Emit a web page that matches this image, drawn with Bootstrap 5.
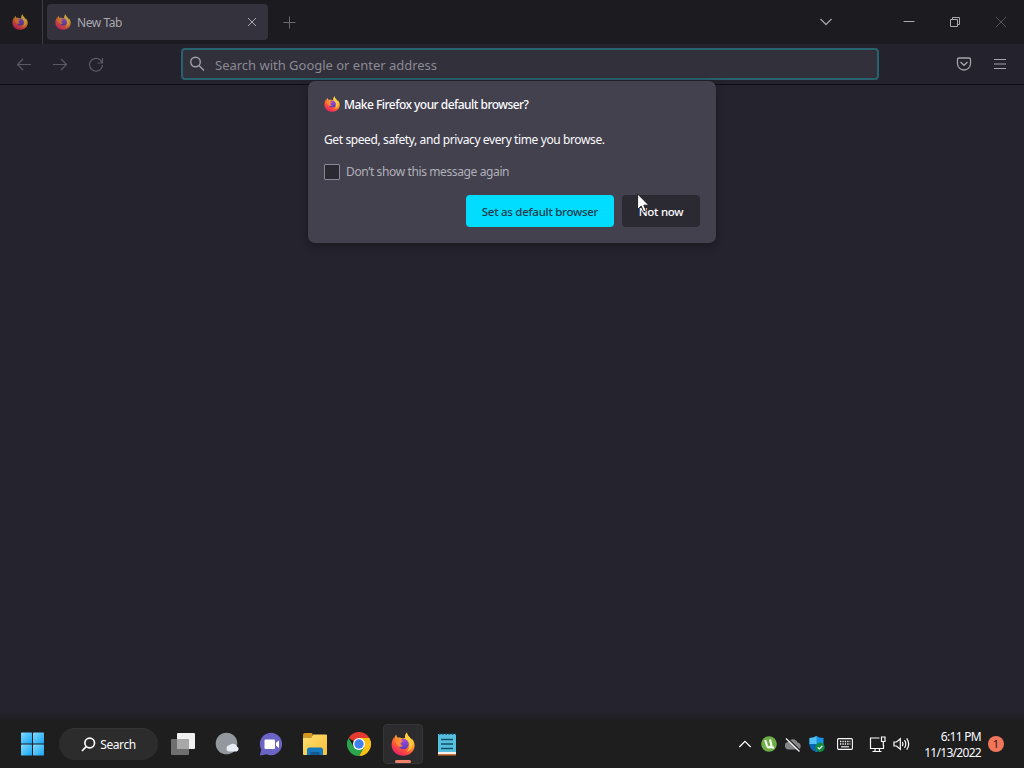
<!DOCTYPE html>
<html lang="en">
<head>
  <meta charset="UTF-8">
  <title>New Tab</title>
  <link rel="stylesheet" href="https://cdn.jsdelivr.net/npm/bootstrap@5.3.2/dist/css/bootstrap.min.css">
  <style>
    body {
      background: #25232e;
      font-family: "Noto Sans", "Open Sans", sans-serif;
      font-size: 12px;
      line-height: 16px;
      color: #fbfbfe;
    }
    svg { display: block; flex: none; }
    .line { fill: none; stroke: currentColor; }

    /* browser chrome */
    .tab-strip { height: 44px; background: #1c1b20; }
    .pinned { width: 43px; padding-left: 12px; border-right: 1px solid #3d3c43; }
    .faded { opacity: .72; }
    .browser-tab {
      width: 221px; height: 36px; margin-left: 4px; padding: 0 10px 0 8px;
      background: #34323d; border-radius: 4px; color: #a9a8ae;
    }
    .new-tab { width: 42px; color: #69686e; }
    .all-tabs { width: 40px; margin-right: 40px; color: #a09fa4; }
    .win-btn { width: 46px; color: #aaa9ad; }
    .win-close { color: #55545a; }
    .tool-bar { height: 41px; background: #24232d; border-bottom: 1px solid #0f0e14; padding: 0 8px; }
    .tool-btn { width: 32px; height: 32px; }
    .nav-tools { color: #5b5a63; }
    .menu-tools { color: #a5a4ab; }
    .address {
      width: 698px; height: 32px; margin-left: 69px; padding-left: 6px;
      background: #32303b; border: 2px solid #28626e; border-radius: 4px;
      color: #8b8a93; font-size: 13px;
    }
    .address svg { color: #a09fa8; }

    /* default browser prompt */
    .prompt {
      position: absolute; top: -4px; left: 308px; width: 408px; height: 162px;
      padding: 15px 16px 16px; background: #43414e; border-radius: 7px;
      box-shadow: 0 2px 8px rgba(0, 0, 0, .35);
    }
    .prompt-text { margin-top: 19px; }
    .prompt-check { margin-bottom: 15px; color: #b1b0b9; }
    .check { width: 16px; height: 16px; background: #2b2a33; border: 1px solid #8a8893; border-radius: 1px; }
    .prompt-btn { height: 32px; border: 0; border-radius: 4px; padding: 1px 0 0; font-size: 11.5px; line-height: 32px; }
    .btn-set { width: 148px; background: #00ddff; color: #1e3a4c; font-weight: 500; }
    .btn-later { width: 78px; background: #2b2a33; color: #fbfbfe; font-weight: 500; }
    .pointer { position: absolute; left: 329px; top: 112px; }

    /* taskbar */
    .task-bar { height: 49px; background: #1e1e1f; padding: 1px 20px 0 10px; }
    .fade-edge { height: 8px; background: linear-gradient(#25232e, #201f24); }
    .task-btn { width: 44px; height: 40px; }
    .search-pill { width: 99px; height: 32px; margin: 0 3px 0 5px; border-radius: 16px; background: #2c2c2c; border-top: 1px solid #353535; }
    .task-active { width: 40px; margin: 0 2px; background: #2c2b2d; border: 1px solid #363537; border-radius: 4px; }
    .running { position: absolute; bottom: 0; left: 11px; width: 16px; height: 3px; border-radius: 2px; background: #f0826c; }
    .tray-btn { width: 24px; }
    .clock { width: 68px; padding-top: 1px; }
    .note-count { width: 16px; height: 16px; margin-left: 7px; border-radius: 50%; background: #f0755b; color: #2a1512; font-size: 11px; }

    /* letter spacing per label */
    .ls-tab { letter-spacing: -.42px; padding: 2px 0 0 6px; }
    .ls-addr { padding: 2px 0 0 10px; letter-spacing: -.01px; }
    .ls-title { letter-spacing: -.53px; font-weight: 500; padding-top: 1px; }
    .ls-text { letter-spacing: -.39px; }
    .ls-check { letter-spacing: -.38px; padding-left: 6px; }
    .ls-btn { letter-spacing: -.28px; }
    .ls-task { letter-spacing: -.4px; padding-top: 1px; }
    .ls-clock { letter-spacing: -.7px; }
  </style>
</head>
<body class="vh-100 overflow-hidden d-flex flex-column">

  <svg width="0" height="0" class="position-absolute">
    <defs>
      <linearGradient id="flame" x1=".85" y1="0" x2=".25" y2="1">
        <stop offset="0" stop-color="#fff04f"/>
        <stop offset=".35" stop-color="#ffb02e"/>
        <stop offset=".65" stop-color="#ff5a36"/>
        <stop offset="1" stop-color="#e6196b"/>
      </linearGradient>
      <linearGradient id="globe" x1="0" y1="0" x2="0" y2="1">
        <stop offset="0" stop-color="#a24be8"/>
        <stop offset="1" stop-color="#5b3bb8"/>
      </linearGradient>
      <linearGradient id="win" x1="0" y1="0" x2="1" y2="1">
        <stop offset="0" stop-color="#7fdcff"/>
        <stop offset="1" stop-color="#18a3f2"/>
      </linearGradient>
      <linearGradient id="folder" x1="0" y1="0" x2="1" y2="1">
        <stop offset="0" stop-color="#ffdf70"/>
        <stop offset="1" stop-color="#f6bf38"/>
      </linearGradient>
    </defs>
    <symbol id="firefox" viewBox="0 0 24 24">
      <path fill="url(#flame)" d="M16 .4c0 2 1 3.200 2.500 4.700.9.900 1.500 1.900 1.800 3l.4-1.700c2.100 2.300 3.100 5 2.900 7.900C23 20 18.400 23.700 12.300 23.700 5.800 23.700.7 19.300.6 13c0-2.900.9-5.500 2.300-7.500l.5 1.400c.1-1.700.7-3.200 1.800-4.300.2 1.300.7 2.300 1.500 3.100.9-.3 1.900-.3 2.700 0L12 6.500l2.200-.8C13.800 3.500 14.600 1.600 16 .4z"/>
      <circle cx="12.500" cy="12" r="5.300" fill="url(#globe)"/>
      <path fill="#ff8a30" d="M4.500 8.300c1.700-1.100 3.600-1 5.300-.2 1 .4 1.700.3 2.200.5-.2 1.300-1.300 1.600-2.300 2.400-.3 1.700.8 2.700 2.400 2.700-1.400 1.300-3.900 1.500-5.200.3C5.500 12.500 4.500 10.700 4.500 8.300z"/>
      <path fill="#ffcf3c" d="M16 .4c0 2 1 3.200 2.500 4.700 2.600 2.500 3.600 6 2.600 9.300-.8 2.800-3 4.800-5.600 5.600 2.700-2.400 3.700-5.500 2.500-9-.8-2.300-3.300-3.400-3.800-5.300C13.800 3.500 14.600 1.600 16 .4z" opacity=".85"/>
    </symbol>
  </svg>

  <header>
    <div class="tab-strip d-flex align-items-center">
      <div class="pinned h-100 d-flex align-items-center">
        <svg class="faded" width="16" height="16"><use href="#firefox"/></svg>
      </div>
      <div class="browser-tab d-flex align-items-center">
        <svg class="faded" width="16" height="16"><use href="#firefox"/></svg>
        <span class="ls-tab flex-grow-1">New Tab</span>
        <svg class="line" width="12" height="12" viewBox="0 0 12 12"><path d="M2 2l8 8M10 2l-8 8"/></svg>
      </div>
      <div class="new-tab d-flex justify-content-center">
        <svg class="line" width="14" height="14" viewBox="0 0 14 14"><path d="M7.500 1.500v12M1.500 7.500h12"/></svg>
      </div>
      <div class="all-tabs ms-auto d-flex justify-content-center">
        <svg class="line" width="14" height="10" viewBox="0 0 14 10" stroke-width="1.400"><path d="M1.500 2L7 7.500 12.500 2"/></svg>
      </div>
      <div class="win-btn d-flex justify-content-center">
        <svg class="line" width="12" height="12" viewBox="0 0 12 12"><path d="M.5 5.500h11"/></svg>
      </div>
      <div class="win-btn d-flex justify-content-center">
        <svg class="line" width="12" height="12" viewBox="0 0 12 12"><path d="M1.500 3.500h7v7h-7zM3.500 3.500v-2h7v7h-2"/></svg>
      </div>
      <div class="win-btn win-close d-flex justify-content-center">
        <svg class="line" width="12" height="12" viewBox="0 0 12 12"><path d="M1 1l10 10M11 1L1 11"/></svg>
      </div>
    </div>

    <div class="tool-bar d-flex align-items-center">
      <div class="nav-tools d-flex gap-1">
        <div class="tool-btn d-flex align-items-center justify-content-center">
          <svg class="line" width="16" height="16" viewBox="0 0 16 16" stroke-width="1.200"><path d="M15 8.500H1.500M7 3L1.500 8.500 7 14"/></svg>
        </div>
        <div class="tool-btn d-flex align-items-center justify-content-center">
          <svg class="line" width="16" height="16" viewBox="0 0 16 16" stroke-width="1.200"><path d="M1 8.500h13.500M9 3l5.500 5.500L9 14"/></svg>
        </div>
        <div class="tool-btn d-flex align-items-center justify-content-center">
          <svg class="line" width="16" height="16" viewBox="0 0 16 16" stroke-width="1.200"><path d="M14 6.500A6.400 6.400 0 1 0 14.400 9M14.500 2v5h-5"/></svg>
        </div>
      </div>
      <div class="address d-flex align-items-center">
        <svg class="line" width="16" height="16" viewBox="0 0 16 16" stroke-width="1.400"><circle cx="6.500" cy="6" r="4.800"/><path d="M10 9.500l5 5"/></svg>
        <span class="ls-addr">Search with Google or enter address</span>
      </div>
      <div class="menu-tools d-flex gap-1 ms-auto">
        <div class="tool-btn d-flex align-items-center justify-content-center">
          <svg class="line" width="16" height="16" viewBox="0 0 16 16" stroke-width="1.300"><path d="M3 2h10a1.500 1.500 0 0 1 1.500 1.500V7.500a6.500 6.500 0 0 1-13 0V3.500A1.500 1.500 0 0 1 3 2zM4.500 6L8 9.300 11.500 6"/></svg>
        </div>
        <div class="tool-btn d-flex align-items-center justify-content-center">
          <svg class="line" width="16" height="16" viewBox="0 0 16 16"><path d="M2 3.500h12M2 8h12M2 12.500h12"/></svg>
        </div>
      </div>
    </div>
  </header>

  <main class="flex-grow-1 position-relative">
    <div class="prompt">
      <div class="d-flex align-items-start">
        <svg width="16" height="16"><use href="#firefox"/></svg>
        <span class="ls-title ms-1">Make Firefox your default browser?</span>
      </div>
      <div class="prompt-text ls-text mb-3">Get speed, safety, and privacy every time you browse.</div>
      <div class="prompt-check d-flex align-items-center text-nowrap">
        <span class="check"></span>
        <span class="ls-check">Don’t show this message again</span>
      </div>
      <div class="d-flex justify-content-end gap-2">
        <button type="button" class="btn prompt-btn btn-set"><span class="ls-btn">Set as default browser</span></button>
        <button type="button" class="btn prompt-btn btn-later"><span class="ls-btn">Not now</span></button>
      </div>
      <svg class="pointer" width="13" height="20" viewBox="0 0 13 20"><path fill="#fff" stroke="#16151a" stroke-width=".9" d="M.6.900v15.600l3.600-3.400 2.500 5.700 2.500-1.100-2.400-5.500h5z"/></svg>
    </div>
  </main>

  <div class="fade-edge"></div>
  <footer class="task-bar d-flex align-items-center">
    <div class="task-btn d-flex align-items-center justify-content-center">
      <svg width="24" height="24" viewBox="0 0 24 24" fill="url(#win)"><rect x="1" y=".5" width="11" height="11" rx=".6"/><rect x="13" y=".5" width="11" height="11" rx=".6"/><rect x="1" y="12.500" width="11" height="11" rx=".6"/><rect x="13" y="12.500" width="11" height="11" rx=".6"/></svg>
    </div>
    <div class="search-pill d-flex align-items-center justify-content-center gap-1">
      <svg class="line" width="15" height="15" viewBox="0 0 15 15" stroke-width="1.700"><circle cx="8.700" cy="6" r="4.800"/><path d="M5.200 9.600L1 14"/></svg>
      <span class="ls-task">Search</span>
    </div>
    <div class="task-btn d-flex align-items-center justify-content-center">
      <svg width="24" height="24" viewBox="0 0 24 24"><rect x="6" y="1" width="18" height="16" rx="1" fill="#f1f1f1"/><rect x="0" y="7" width="18" height="16" rx="1" fill="#6f6f6f"/><path fill="#a8a8a8" d="M6 7h12v10H6z"/></svg>
    </div>
    <div class="task-btn d-flex align-items-center justify-content-center">
      <svg width="24" height="24" viewBox="0 0 24 24"><circle cx="11.500" cy="11.500" r="10.800" fill="#92989e"/><path fill="#e8edf5" d="M14 19.500a3.200 3.200 0 0 1 .3-6.300 4.600 4.600 0 0 1 7.600 1.200 2.700 2.700 0 0 1-.2 5.100z"/></svg>
    </div>
    <div class="task-btn d-flex align-items-center justify-content-center">
      <svg width="24" height="24" viewBox="0 0 24 24"><path fill="#6a64c4" d="M12 .8a11.200 11.200 0 1 1-4.500 21.500L.8 23.500 2.300 17.500A11.200 11.200 0 0 1 12 .8z"/><rect x="5.500" y="7.500" width="10.500" height="9.500" rx="1" fill="#fff"/><path fill="#fff" d="M17 10.800l3-2.300v7.500l-3-2.300z"/></svg>
    </div>
    <div class="task-btn d-flex align-items-center justify-content-center">
      <svg width="26" height="24" viewBox="0 0 26 24"><path fill="#d9961d" d="M1 3q0-2 2-2h6.500q1 0 1 1v3.500H1z"/><path fill="url(#folder)" d="M1 5.500h8.500l1.500-3H24q1 0 1 1v18.500q0 1-1 1H2q-1 0-1-1z"/><path fill="#1779bd" d="M5 23v-5q0-2.500 2.500-2.500h11Q21 15.500 21 18v5z"/><path fill="#125a90" d="M8.500 20h9v3h-9z"/></svg>
    </div>
    <div class="task-btn d-flex align-items-center justify-content-center">
      <svg width="24" height="24" viewBox="0 0 24 24"><path fill="#e33b2e" d="M12 12L1.600 6a12 12 0 0 1 20.800 0z"/><path fill="#fbc116" d="M12 12V6h10.400A12 12 0 0 1 12 24l5.200-9z"/><path fill="#2da44e" d="M12 12l5.200 3L12 24A12 12 0 0 1 1.600 6l5.200 9z"/><circle cx="12" cy="12" r="6" fill="#fff"/><circle cx="12" cy="12" r="4.700" fill="#3f80ec"/></svg>
    </div>
    <div class="task-btn task-active position-relative d-flex align-items-center justify-content-center">
      <svg width="24" height="24"><use href="#firefox"/></svg>
      <span class="running"></span>
    </div>
    <div class="task-btn d-flex align-items-center justify-content-center">
      <svg width="20" height="24" viewBox="0 0 20 24"><path fill="#56bfe0" d="M1 2h18v18H1z"/><path fill="#f5efe8" d="M1 20h18v2H1z"/><path fill="#c8743e" d="M1 22h18v1.500H1z"/><path stroke="#174f66" stroke-width="1.600" d="M4 7.500h12M4 12h12M4 16.500h12"/><path stroke="#164b63" stroke-width="1.600" stroke-dasharray="1.600 1.600" d="M2 2h17"/></svg>
    </div>

    <div class="ms-auto d-flex align-items-center">
      <div class="tray-btn d-flex justify-content-center">
        <svg class="line" width="14" height="10" viewBox="0 0 14 10" stroke-width="1.300"><path d="M1.300 8L7 2.300 12.700 8"/></svg>
      </div>
      <div class="tray-btn d-flex justify-content-center">
        <svg width="16" height="16" viewBox="0 0 16 16"><circle cx="8" cy="8" r="7.800" fill="#6fae46"/><path d="M4.300 4l1.500 5.300q.9 2.700 3.200 2 1.900-.6 1.200-3L9 3.500M10 10.500q1.200 1.500 3 .8" fill="none" stroke="#f5faf0" stroke-width="2.200"/></svg>
      </div>
      <div class="tray-btn d-flex justify-content-center">
        <svg width="18" height="16" viewBox="0 0 18 16"><path fill="#858688" d="M4.500 13.500a3.800 3.800 0 0 1-.6-7.500A5.400 5.400 0 0 1 13.500 6.500a3.600 3.600 0 0 1 .7 7z"/><path stroke="#1e1e1f" stroke-width="1.200" d="M3 1.800l13 12.500"/><path stroke="#f2f2f2" stroke-width="1.300" d="M2 2.500L15.500 15.500"/></svg>
      </div>
      <div class="tray-btn d-flex justify-content-center">
        <svg width="16" height="16" viewBox="0 0 16 16"><path fill="#1593e6" d="M7.500 0Q10 2 14.500 2v6q0 5-7 8-7-3-7-8V2Q5 2 7.500 0z"/><path fill="#55c0f7" d="M7.500 0v8H.5V2Q5 2 7.500 0z"/><path fill="#0b63b5" d="M7.500 8v8q-7-3-7-8z"/><circle cx="11" cy="11.300" r="4.700" fill="#128a43"/><path d="M8.700 11.300l1.700 1.700 3-3.200" fill="none" stroke="#fff" stroke-width="1.200"/></svg>
      </div>
      <div class="tray-btn d-flex justify-content-center ms-1">
        <svg class="line" width="16" height="12" viewBox="0 0 16 12" stroke-width="1.100"><rect x=".6" y=".6" width="14.800" height="10.800" rx="1.200"/><path stroke-dasharray="1.300 1.100" stroke-width="1.400" d="M3 3.500h10.300M3 6h10.300"/><path d="M4 8.800h8"/></svg>
      </div>
      <div class="tray-btn d-flex justify-content-center ms-2">
        <svg class="line" width="17" height="17" viewBox="0 0 17 17" stroke-width="1.200"><path d="M10.500 2H1.500v10.500h13V9M3.500 15.500h9M6 12.500v3M10.500 12.500v3M12.500 1h3.500v4.500h-3.500zM14.300 5.500v4"/></svg>
      </div>
      <div class="tray-btn d-flex justify-content-center">
        <svg class="line" width="17" height="16" viewBox="0 0 17 16" stroke-width="1.200"><path d="M1 6h2.500L7.300 2.700v10.600L3.500 10H1zM9.300 6q1.300 2 0 4M11.500 4.200q2.600 3.800 0 7.600M13.700 2.300q4 5.700 0 11.400"/></svg>
      </div>
      <div class="clock text-end ls-clock">
        <div>6:11 PM</div>
        <div class="text-nowrap">11/13/2022</div>
      </div>
      <div class="note-count d-flex align-items-center justify-content-center">1</div>
    </div>
  </footer>

  <script src="https://cdn.jsdelivr.net/npm/bootstrap@5.3.2/dist/js/bootstrap.bundle.min.js"></script>
</body>
</html>
